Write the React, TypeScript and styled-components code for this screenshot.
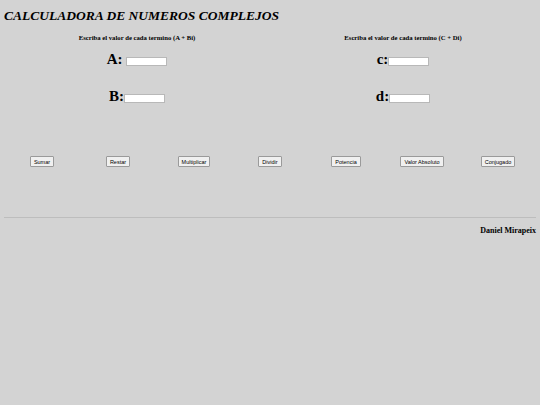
import styled, { createGlobalStyle } from "styled-components";

const GlobalStyle = createGlobalStyle`
  html, body {
    margin: 0;
    padding: 0;
    background: #d3d3d3;
  }
  body {
    font-family: "Liberation Serif", "Times New Roman", serif;
    color: #000;
  }
`;

const terms = [
  { hint: "Escriba el valor de cada termino (A + Bi)", fields: ["A: ", "B:"] },
  { hint: "Escriba el valor de cada termino (C + Di)", fields: ["c:", "d:"] },
];

const operations = [
  "Sumar",
  "Restar",
  "Multiplicar",
  "Dividir",
  "Potencia",
  "Valor Absoluto",
  "Conjugado",
];

export default function App() {
  return (
    <>
      <GlobalStyle />
      <Page>
        <Title>CALCULADORA DE NUMEROS COMPLEJOS</Title>
        <Columns>
          {terms.map((t) => (
            <Column key={t.hint}>
              <Hint>{t.hint}</Hint>
              {t.fields.map((f) => (
                <FieldRow key={f}>
                  <Label>{f}</Label>
                  <Input type="text" />
                </FieldRow>
              ))}
            </Column>
          ))}
        </Columns>
        <ButtonBar>
          {operations.map((op) => (
            <OpButton key={op}>{op}</OpButton>
          ))}
        </ButtonBar>
        <Divider />
        <Author>Daniel Mirapeix</Author>
      </Page>
    </>
  );
}

const Page = styled.div`
  padding: 8px 4px 0;
`;

const Title = styled.h1`
  margin: 0;
  font-size: 13.5px;
  font-style: italic;
  font-weight: bold;
  line-height: 16px;
`;

const Columns = styled.div`
  display: grid;
  grid-template-columns: 1fr 1fr;
  margin-top: 10px;
`;

const Column = styled.div`
  display: flex;
  flex-direction: column;
  align-items: center;
`;

const Hint = styled.p`
  margin: 0 0 9px;
  font-size: 6.7px;
  font-weight: bold;
  line-height: 8px;
`;

const FieldRow = styled.div`
  display: flex;
  align-items: flex-end;
  height: 16px;
  margin-bottom: 21px;
`;

const Label = styled.span`
  font-size: 15px;
  font-weight: bold;
  line-height: 15px;
  white-space: pre;
`;

const Input = styled.input`
  box-sizing: border-box;
  width: 41px;
  height: 9px;
  margin: 0 0 1px;
  padding: 0;
  border: 1px solid #b8b8b8;
  background: #fff;
`;

const ButtonBar = styled.div`
  display: grid;
  grid-template-columns: repeat(7, 1fr);
  justify-items: center;
  margin-top: 31px;
`;

const OpButton = styled.button`
  font-family: "Liberation Sans", Arial, sans-serif;
  font-size: 5.5px;
  line-height: 6px;
  padding: 2px 3px 1px;
  background: #f0f0f0;
  border: 1px solid #9a9a9a;
  border-radius: 1px;
  color: #000;
`;

const Divider = styled.hr`
  margin: 50px 0 0;
  border: 0;
  border-top: 1px solid #bdbdbd;
`;

const Author = styled.p`
  margin: 8px 0 0;
  text-align: right;
  font-size: 8px;
  font-weight: bold;
`;
